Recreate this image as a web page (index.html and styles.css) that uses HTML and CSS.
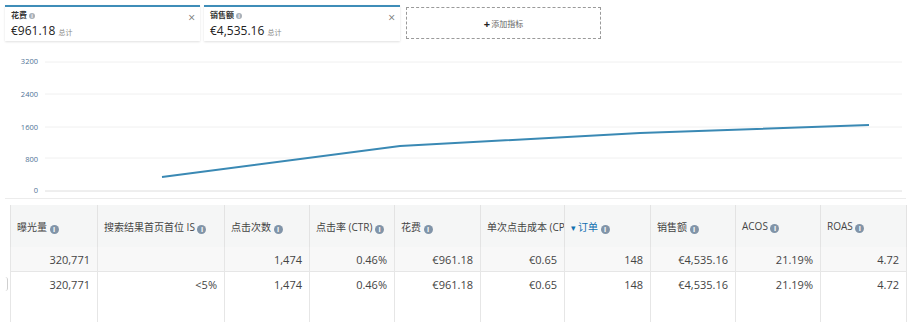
FILE: index.html
```html
<!DOCTYPE html>
<html lang="zh-CN">
<head>
    <meta charset="UTF-8">
    <title>广告报告</title>
    <link rel="stylesheet" href="styles.css">
</head>
<body>

    <!-- 指标卡片 -->
    <div class="metrics">
        <div class="card">
            <div class="card-title">花费 <span class="info">i</span></div>
            <div class="card-value">€961.18 <span class="total">总计</span></div>
            <span class="close">×</span>
        </div>
        <div class="card">
            <div class="card-title">销售额 <span class="info">i</span></div>
            <div class="card-value">€4,535.16 <span class="total">总计</span></div>
            <span class="close">×</span>
        </div>
        <div class="add-metric"><b>+</b> 添加指标</div>
    </div>

    <!-- 图表 -->
    <div class="chart">
        <svg width="912" height="159" viewBox="0 40 912 159">
            <g class="grid">
                <line x1="45" y1="62" x2="902" y2="62"></line>
                <line x1="45" y1="94" x2="902" y2="94"></line>
                <line x1="45" y1="127" x2="902" y2="127"></line>
                <line x1="45" y1="158" x2="902" y2="158"></line>
            </g>
            <line class="axis" x1="45" y1="191" x2="902" y2="191"></line>
            <line class="sep" x1="5" y1="198.5" x2="906" y2="198.5"></line>
            <g class="labels">
                <text x="38" y="64">3200</text>
                <text x="38" y="97">2400</text>
                <text x="38" y="130">1600</text>
                <text x="38" y="162">800</text>
                <text x="38" y="193">0</text>
            </g>
            <polyline class="series" points="162,177 400,146 640,133 869,125"></polyline>
        </svg>
    </div>

    <!-- 数据表 -->
    <div class="table-wrap">
        <span class="handle"></span>
        <table class="data">
            <colgroup>
                <col style="width:87px"><col style="width:127px"><col style="width:85px"><col style="width:85px">
                <col style="width:86px"><col style="width:84px"><col style="width:86px"><col style="width:85px">
                <col style="width:85px"><col style="width:86px">
            </colgroup>
            <thead>
                <tr>
                    <th>曝光量 <span class="info">i</span></th>
                    <th>搜索结果首页首位 IS <span class="info">i</span></th>
                    <th>点击次数 <span class="info">i</span></th>
                    <th>点击率 (CTR) <span class="info">i</span></th>
                    <th>花费 <span class="info">i</span></th>
                    <th class="clip">单次点击成本 (CPC)</th>
                    <th class="sorted"><span class="arrow">▾</span>订单 <span class="info">i</span></th>
                    <th>销售额 <span class="info">i</span></th>
                    <th>ACOS <span class="info">i</span></th>
                    <th>ROAS <span class="info">i</span></th>
                </tr>
            </thead>
            <tbody>
                <tr class="total-row">
                    <td>320,771</td><td></td><td>1,474</td><td>0.46%</td><td>€961.18</td>
                    <td>€0.65</td><td>148</td><td>€4,535.16</td><td>21.19%</td><td>4.72</td>
                </tr>
                <tr>
                    <td>320,771</td><td>&lt;5%</td><td>1,474</td><td>0.46%</td><td>€961.18</td>
                    <td>€0.65</td><td>148</td><td>€4,535.16</td><td>21.19%</td><td>4.72</td>
                </tr>
            </tbody>
        </table>
    </div>

</body>
</html>
```
FILE: styles.css
```css
body {
    margin: 0;
    width: 912px;
    height: 322px;
    overflow: hidden;
    background-color: #fff;
    font-family: "Open Sans", "Noto Sans CJK SC", sans-serif;
    color: #333;
}
.metrics {
    display: flex;
    align-items: flex-start;
    gap: 4px;
    padding: 5px 0 0 5px;
    height: 40px;
    box-sizing: border-box;
}
.card {
    position: relative;
    width: 195px;
    height: 36px;
    box-sizing: border-box;
    border-top: 2px solid #3e8db8;
    box-shadow: 0 1px 2px rgba(0, 0, 0, 0.12);
    padding: 2px 0 0 6px;
}
.card + .card {
    width: 196px;
}
.card-title {
    font-size: 8px;
    font-weight: bold;
    color: #333;
    line-height: 11px;
}
.card-value {
    font-size: 12px;
    line-height: 18px;
    margin-top: 2px;
    color: #222;
}
.total {
    font-size: 7px;
    color: #888;
}
.close {
    position: absolute;
    top: 2px;
    right: 5px;
    font-size: 12px;
    color: #777;
}
.add-metric {
    width: 195px;
    height: 32px;
    margin: 2px 0 0 2px;
    box-sizing: border-box;
    border: 1px dashed #9a9a9a;
    display: flex;
    align-items: center;
    justify-content: center;
    font-size: 8px;
    color: #666;
}
.add-metric b {
    font-size: 11px;
    color: #222;
    margin-right: 1px;
}
.info {
    display: inline-block;
    width: 9px;
    height: 9px;
    border-radius: 50%;
    background-color: #8194a8;
    color: #fff;
    font-size: 7px;
    line-height: 9px;
    text-align: center;
    font-weight: bold;
    vertical-align: -1px;
}
.card-title .info {
    width: 6px;
    height: 6px;
    line-height: 6px;
    font-size: 5px;
    vertical-align: 0;
    background-color: #a8b0b8;
}
.chart {
    height: 159px;
}
.chart svg {
    display: block;
}
.grid line {
    stroke: #f0f0f0;
    stroke-width: 1;
}
.axis {
    stroke: #dedede;
    stroke-width: 1;
}
.sep {
    stroke: #ececec;
    stroke-width: 1;
}
.labels text {
    font-size: 7.5px;
    fill: #4f7396;
    text-anchor: end;
}
.series {
    fill: none;
    stroke: #3a89b4;
    stroke-width: 2;
}
.table-wrap {
    position: relative;
    padding: 6px 0 0 10px;
}
.handle {
    position: absolute;
    left: 4px;
    top: 78px;
    width: 3px;
    height: 14px;
    border-right: 1px solid #cfcfcf;
    border-radius: 0 3px 3px 0;
}
.data {
    border-collapse: collapse;
    table-layout: fixed;
    width: 896px;
    font-size: 11px;
}
.data th {
    height: 42px;
    box-sizing: border-box;
    background-color: #f5f6f6;
    text-align: left;
    font-weight: normal;
    font-size: 10px;
    color: #444;
    padding: 0 6px;
    white-space: nowrap;
    overflow: hidden;
    border-left: 1px solid #e3e3e3;
    border-right: 1px solid #e3e3e3;
}
.data th.clip {
    text-overflow: clip;
    padding-right: 0;
}
.data th.sorted {
    color: #0f6fb0;
}
.arrow {
    font-size: 9px;
    margin-right: 2px;
}
.data td {
    text-align: right;
    padding: 0 7px;
    color: #444;
    white-space: nowrap;
    border-left: 1px solid #e6e6e6;
    border-right: 1px solid #e6e6e6;
}
.total-row td {
    height: 24px;
    background-color: #f8f8f8;
    border-bottom: 1px solid #e6e6e6;
}
.total-row + tr td {
    height: 46px;
    vertical-align: top;
    padding-top: 5px;
}
```
